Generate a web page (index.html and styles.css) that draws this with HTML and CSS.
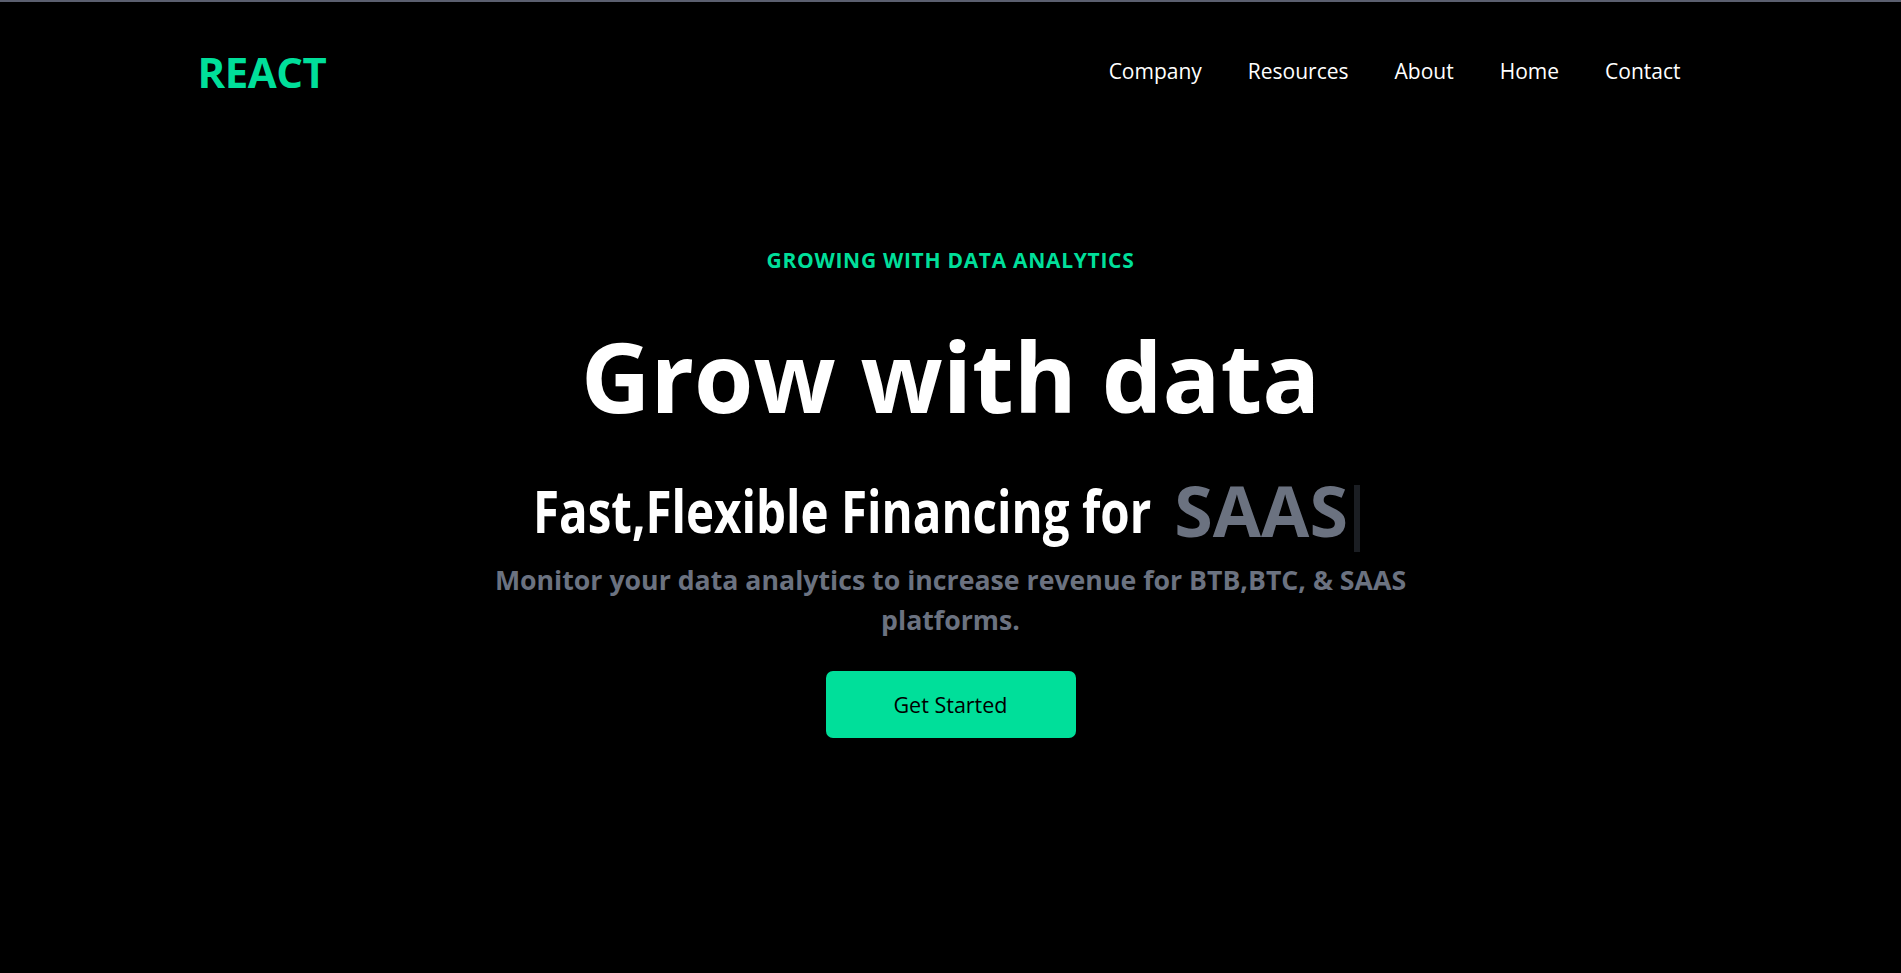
FILE: index.html
```html
<!DOCTYPE html>
<html lang="en">
<head>
<meta charset="utf-8">
<title>React</title>
<link rel="stylesheet" href="styles.css">
</head>
<body>
<div class="topline"></div>
<header class="navbar">
  <h1 class="logo">REACT</h1>
  <ul class="nav">
    <li>Company</li>
    <li>Resources</li>
    <li>About</li>
    <li>Home</li>
    <li>Contact</li>
  </ul>
</header>
<main class="hero">
  <p class="eyebrow">GROWING WITH DATA ANALYTICS</p>
  <h2 class="title">Grow with data</h2>
  <div class="typed-row">
    <p class="typed-lead">Fast,Flexible Financing for</p>
    <span class="typed-word">SAAS</span><span class="cursor"></span>
  </div>
  <p class="sub">Monitor your data analytics to increase revenue for BTB,BTC, &amp; SAAS platforms.</p>
  <button class="cta">Get Started</button>
</main>
</body>
</html>
```
FILE: styles.css
```css
* { box-sizing: border-box; }
html, body {
  margin: 0;
  padding: 0;
  background: #000;
  color: #fff;
  font-family: "Open Sans", "Noto Sans", "DejaVu Sans", sans-serif;
}
body { min-height: 973px; }
.topline {
  height: 2px;
  background: #5b5f6f;
}
.navbar {
  display: flex;
  justify-content: space-between;
  align-items: center;
  height: 140px;
  max-width: 1506px;
  margin: 0 auto;
}
.logo {
  margin: 0;
  font-size: 42px;
  line-height: 50px;
  font-weight: 700;
  color: #00df9a;
  letter-spacing: -0.5px;
}
.nav {
  display: flex;
  list-style: none;
  margin: 0;
  padding: 0;
}
.nav li {
  font-size: 21px;
  line-height: 28px;
  padding: 0 23px;
  margin-top: -2px;
}
.hero {
  display: flex;
  flex-direction: column;
  align-items: center;
  text-align: center;
  max-width: 1000px;
  margin: 0 auto;
}
.eyebrow {
  margin: 104px 0 0;
  font-size: 21px;
  line-height: 28px;
  font-weight: 700;
  letter-spacing: 0.7px;
  color: #00df9a;
}
.title {
  margin: 54px 0 0;
  font-size: 96px;
  line-height: 96px;
  font-weight: 700;
}
.typed-row {
  display: flex;
  justify-content: center;
  align-items: center;
  margin-top: 50px;
  padding-right: 8px;
  height: 72px;
}
.typed-lead {
  margin: 0 -75px;
  font-size: 59px;
  line-height: 72px;
  font-weight: 700;
  white-space: nowrap;
  transform: scaleX(0.805);
}
.typed-word {
  margin-left: 23px;
  font-size: 70px;
  line-height: 72px;
  font-weight: 700;
  color: #6b7280;
}
.cursor {
  align-self: flex-start;
  margin: 11px 0 0 6px;
  width: 6px;
  height: 67px;
  background: #1b1e23;
}
.sub {
  margin: 14px 0 0;
  font-size: 26.7px;
  line-height: 40px;
  font-weight: 700;
  color: #6b7280;
  max-width: 960px;
}
.cta {
  margin-top: 31px;
  width: 250px;
  height: 67px;
  border: none;
  border-radius: 7px;
  background: #00df9a;
  color: #000;
  font-family: inherit;
  font-size: 21.5px;
  font-weight: 500;
  cursor: pointer;
}
```
